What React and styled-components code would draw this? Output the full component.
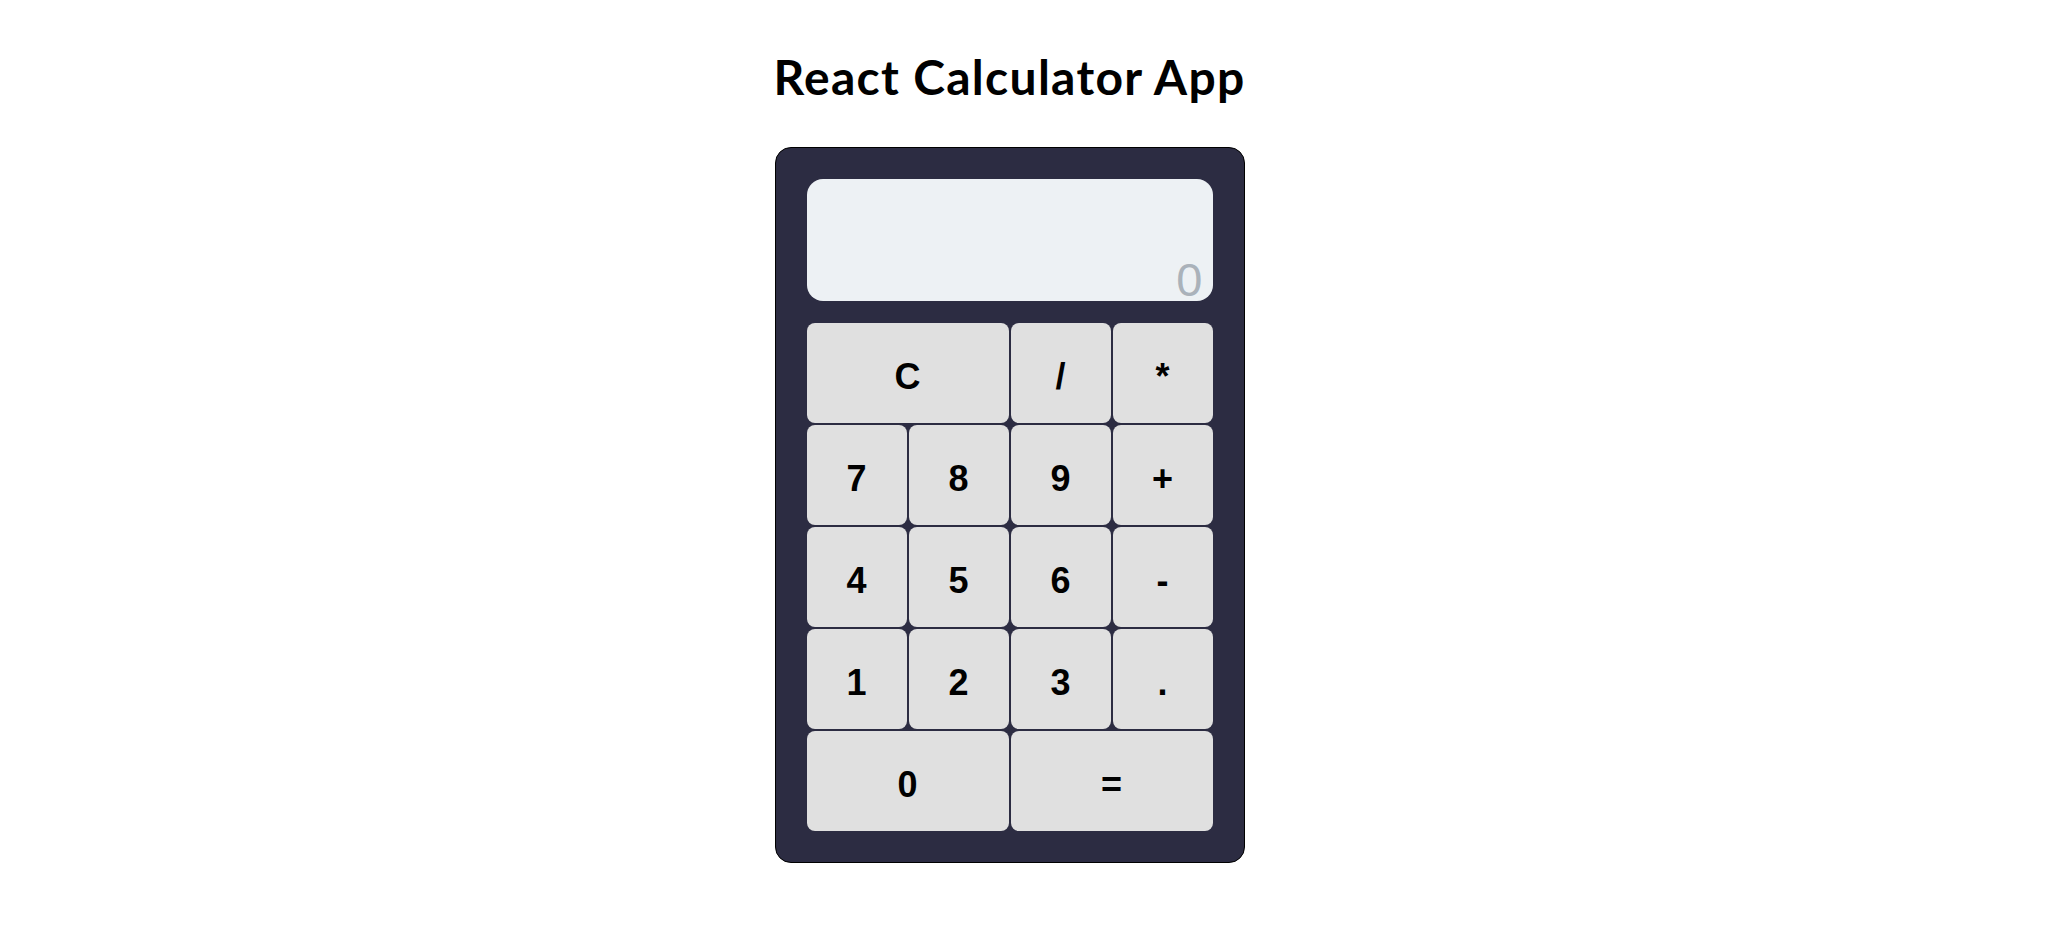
import React, { useState } from "react";
import styled, { createGlobalStyle } from "styled-components";

const Global = createGlobalStyle`
  html, body { margin: 0; padding: 0; background: #ffffff; }
  body { font-family: "Liberation Sans", Arial, sans-serif; }
`;

const Page = styled.div`
  display: flex;
  flex-direction: column;
  align-items: center;
  padding: 42px 37px 0 0;
`;

const Title = styled.h1`
  margin: 0 0 35px;
  font-family: Lato, "Open Sans", sans-serif;
  font-weight: 700;
  font-size: 48px;
  letter-spacing: 1.3px;
  line-height: 70px;
  color: #000;
`;

const Calculator = styled.div`
  box-sizing: border-box;
  width: 470px;
  padding: 31px;
  background: #2c2c42;
  border: 1px solid #000;
  border-radius: 16px;
  display: flex;
  flex-direction: column;
  gap: 22px;
`;

const Display = styled.div`
  box-sizing: border-box;
  height: 122px;
  background: #edf1f4;
  border-radius: 16px;
  display: flex;
  align-items: flex-end;
  justify-content: flex-end;
  padding: 0 10px 0;
  font-family: "Liberation Sans", Arial, sans-serif;
  font-size: 47px;
  line-height: 0.9;
  color: #aab2ba;
`;

const Keys = styled.div`
  display: grid;
  grid-template-columns: repeat(4, 100px);
  grid-auto-rows: 100px;
  gap: 2px;
`;

const Key = styled.button`
  grid-column: span ${(p) => p.$span || 1};
  border: none;
  border-radius: 8px;
  background: #e0e0e0;
  color: #000;
  font-family: "Liberation Sans", Arial, sans-serif;
  font-weight: 700;
  font-size: 36px;
  padding: 8px 0 0;
  cursor: pointer;
`;

const keys = [
  ["C", 2], ["/", 1], ["*", 1],
  ["7", 1], ["8", 1], ["9", 1], ["+", 1],
  ["4", 1], ["5", 1], ["6", 1], ["-", 1],
  ["1", 1], ["2", 1], ["3", 1], [".", 1],
  ["0", 2], ["=", 2],
];

export default function App() {
  const [value] = useState("0");
  return (
    <>
      <Global />
      <Page>
        <Title>React Calculator App</Title>
        <Calculator>
          <Display>{value}</Display>
          <Keys>
            {keys.map(([k, span]) => (
              <Key key={k} $span={span}>{k}</Key>
            ))}
          </Keys>
        </Calculator>
      </Page>
    </>
  );
}
